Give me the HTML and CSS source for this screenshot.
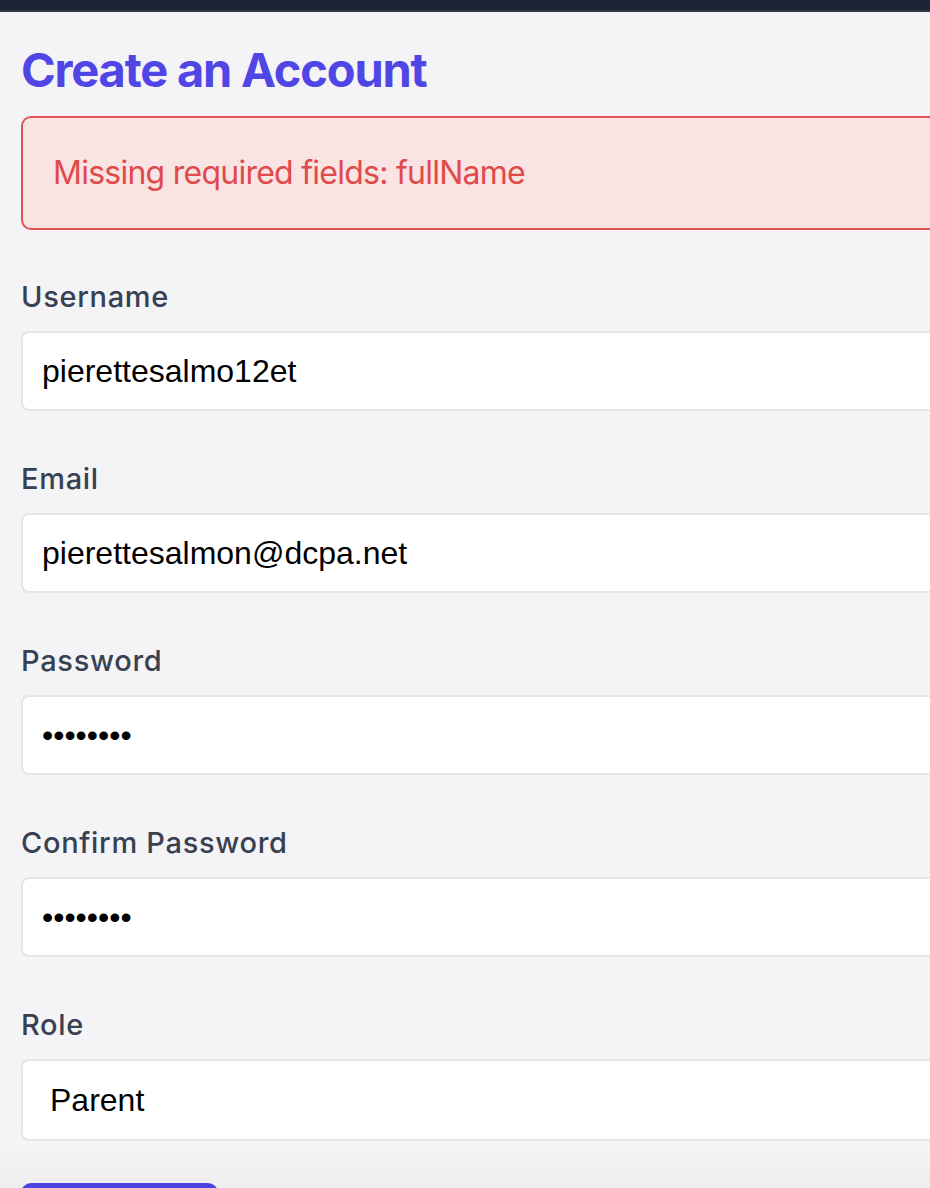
FILE: index.html
```html
<!DOCTYPE html>
<html lang="en">
<head>
<meta charset="utf-8">
<title>Create an Account</title>
<link rel="stylesheet" href="styles.css">
</head>
<body>
<header class="topbar"></header>
<main class="page">
  <h1 class="title">Create an Account</h1>
  <div class="alert">Missing required fields: fullName</div>
  <form class="form">
    <div class="field">
      <label class="label" for="username">Username</label>
      <input class="input" id="username" type="text" value="pierettesalmo12et">
    </div>
    <div class="field">
      <label class="label" for="email">Email</label>
      <input class="input" id="email" type="email" value="pierettesalmon@dcpa.net">
    </div>
    <div class="field">
      <label class="label" for="password">Password</label>
      <input class="input" id="password" type="password" value="abcdefgh">
    </div>
    <div class="field">
      <label class="label" for="confirm">Confirm Password</label>
      <input class="input" id="confirm" type="password" value="abcdefgh">
    </div>
    <div class="field field-last">
      <label class="label" for="role">Role</label>
      <select class="input select" id="role">
        <option>Parent</option>
        <option>Student</option>
        <option>Teacher</option>
      </select>
    </div>
    <button class="submit" type="submit">Register</button>
  </form>
</main>
<div class="bottom-fade"></div>
</body>
</html>
```
FILE: styles.css
```css
html, body {
  margin: 0;
  padding: 0;
}
body {
  background: #f4f4f6;
  overflow: hidden;
  font-family: Inter, "Noto Sans", sans-serif;
  height: 1188px;
}
.topbar {
  height: 10px;
  background: #1e2235;
  border-bottom: 2px solid #303447;
}
.page {
  width: 1300px;
  padding: 26px 0 0 21px;
}
.title {
  margin: 0;
  font-size: 47px;
  line-height: 64px;
  font-weight: 700;
  color: #4f46e5;
  letter-spacing: -1.2px;
}
.alert {
  margin-top: 14px;
  border: 2px solid #e05656;
  border-radius: 10px;
  background: #f9e3e3;
  color: #e04a4a;
  font-size: 32px;
  line-height: 48px;
  padding: 31px 30px;
  letter-spacing: -0.75px;
}
.form {
  margin: 47px 0 0;
}
.field {
  display: flex;
  flex-direction: column;
  margin-bottom: 48px;
}
.field-last {
  margin-bottom: 42px;
}
.label {
  font-size: 29px;
  line-height: 40px;
  font-weight: 500;
  color: #374151;
  margin-bottom: 14px;
  letter-spacing: 0.7px;
}
.input {
  box-sizing: border-box;
  height: 80px;
  border: 2px solid #e4e5e9;
  border-radius: 8px;
  background: #fff;
  padding: 0 19px;
  font-family: "Liberation Sans", Arial, sans-serif;
  font-size: 32px;
  color: #000;
  outline: none;
}
.select {
  height: 82px;
  padding-left: 27px;
  appearance: none;
  -webkit-appearance: none;
}
.submit {
  align-self: flex-start;
  width: 197px;
  height: 80px;
  border: none;
  border-radius: 10px;
  background: #4f46e5;
  color: #fff;
  font-family: Inter, sans-serif;
  font-size: 32px;
}
.bottom-fade {
  position: fixed;
  left: 0;
  right: 0;
  bottom: 0;
  height: 40px;
  background: linear-gradient(to bottom, rgba(0,0,0,0), rgba(0,0,0,0.025));
  pointer-events: none;
}
```
